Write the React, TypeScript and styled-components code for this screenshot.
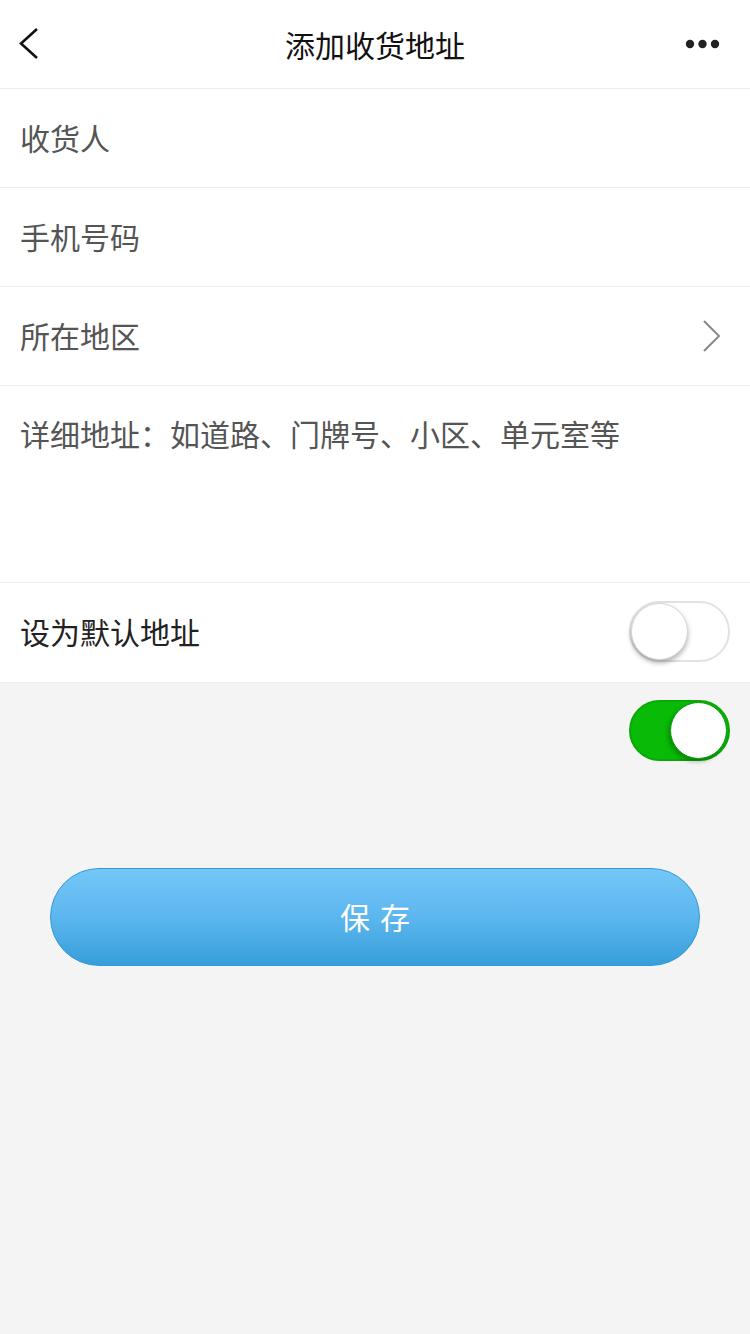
import React, { useState } from "react";
import styled, { createGlobalStyle } from "styled-components";

const Global = createGlobalStyle`
  html, body { margin: 0; padding: 0; background: #f4f4f4; }
  body { font-family: "Noto Sans CJK SC", "Noto Sans", sans-serif; }
  * { box-sizing: border-box; }
`;

const Page = styled.div`
  width: 750px;
  min-height: 1334px;
  background: #f4f4f4;
  display: flex;
  flex-direction: column;
`;

const Header = styled.div`
  height: 89px;
  background: #fff;
  border-bottom: 1px solid #ececec;
  display: flex;
  align-items: center;
  justify-content: space-between;
  padding: 0 29px 0 18px;
  position: relative;
`;

const Title = styled.div`
  position: absolute;
  left: 0;
  right: 0;
  text-align: center;
  font-size: 30px;
  color: #111;
  line-height: 86px;
  pointer-events: none;
`;

const IconBtn = styled.div`
  display: flex;
  align-items: center;
  z-index: 1;
`;

const Form = styled.div`
  background: #fff;
  display: flex;
  flex-direction: column;
  border-bottom: 1px solid #ececec;
`;

const Row = styled.div<{ $tall?: boolean; $last?: boolean }>`
  height: ${(p) => (p.$tall ? "197px" : "99px")};
  border-bottom: ${(p) => (p.$last ? "none" : "1px solid #ececec")};
  display: flex;
  align-items: ${(p) => (p.$tall ? "flex-start" : "center")};
  justify-content: space-between;
  padding: ${(p) => (p.$tall ? "27px 20px 0 20px" : "0 20px 3px 20px")};
`;

const Label = styled.div<{ $dark?: boolean }>`
  font-size: 30px;
  line-height: 40px;
  color: ${(p) => (p.$dark ? "#222" : "#555")};
`;

const Chevron = styled.svg`
  margin-right: 9px;
  margin-top: 3px;
`;

const Track = styled.div<{ $on: boolean }>`
  width: 101px;
  height: 61px;
  border-radius: 31px;
  background: ${(p) => (p.$on ? "#09bb07" : "#fff")};
  border: 2px solid ${(p) => (p.$on ? "#09a806" : "#e2e2e2")};
  position: relative;
  flex-shrink: 0;
`;

const Knob = styled.div<{ $on: boolean }>`
  position: absolute;
  top: 0;
  ${(p) => (p.$on ? "right: 1px;" : "left: 0;")}
  width: 57px;
  height: 57px;
  border-radius: 50%;
  background: #fff;
  box-shadow: ${(p) =>
    p.$on ? "-2px 3px 4px rgba(0,0,0,0.25)" : "0 3px 5px rgba(0,0,0,0.3)"};
  border: 1px solid ${(p) => (p.$on ? "#0a9a08" : "#d6d6d6")};
`;

const Switch = ({ on, onToggle }: { on: boolean; onToggle: () => void }) => (
  <Track $on={on} onClick={onToggle}>
    <Knob $on={on} />
  </Track>
);

const ExtraRow = styled.div`
  display: flex;
  justify-content: flex-end;
  padding: 17px 20px 0 0;
`;

const SaveWrap = styled.div`
  padding: 107px 50px 0 50px;
`;

const SaveButton = styled.button`
  width: 650px;
  height: 98px;
  border-radius: 49px;
  border: 1px solid #2f98d6;
  background: linear-gradient(to bottom, #74c7f7 0%, #5cb6ef 50%, #379ed9 100%);
  color: #fff;
  font-family: "Noto Sans CJK SC", "Noto Sans", sans-serif;
  font-size: 30px;
  letter-spacing: 10px;
  text-indent: 10px;
  display: flex;
  align-items: center;
  justify-content: center;
  padding: 0 0 2px 0;
`;

export default function App() {
  const [def, setDef] = useState(false);
  const [other, setOther] = useState(true);
  return (
    <Page>
      <Global />
      <Header>
        <IconBtn>
          <svg width="24" height="36" viewBox="0 0 24 36">
            <path d="M19 3 L3 17.5 L19 32" fill="none" stroke="#111" strokeWidth="2.6" strokeLinejoin="miter" />
          </svg>
        </IconBtn>
        <Title>添加收货地址</Title>
        <IconBtn>
          <svg width="36" height="12" viewBox="0 0 36 12">
            <circle cx="5" cy="6" r="4.2" fill="#222" />
            <circle cx="17.5" cy="6" r="4.2" fill="#222" />
            <circle cx="30" cy="6" r="4.2" fill="#222" />
          </svg>
        </IconBtn>
      </Header>
      <Form>
        <Row>
          <Label>收货人</Label>
        </Row>
        <Row>
          <Label>手机号码</Label>
        </Row>
        <Row>
          <Label>所在地区</Label>
          <Chevron width="20" height="34" viewBox="0 0 20 34">
            <path d="M3 2 L18 17 L3 32" fill="none" stroke="#888" strokeWidth="2" />
          </Chevron>
        </Row>
        <Row $tall>
          <Label>详细地址：如道路、门牌号、小区、单元室等</Label>
        </Row>
        <Row $last>
          <Label $dark>设为默认地址</Label>
          <Switch on={def} onToggle={() => setDef(!def)} />
        </Row>
      </Form>
      <ExtraRow>
        <Switch on={other} onToggle={() => setOther(!other)} />
      </ExtraRow>
      <SaveWrap>
        <SaveButton>保存</SaveButton>
      </SaveWrap>
    </Page>
  );
}
